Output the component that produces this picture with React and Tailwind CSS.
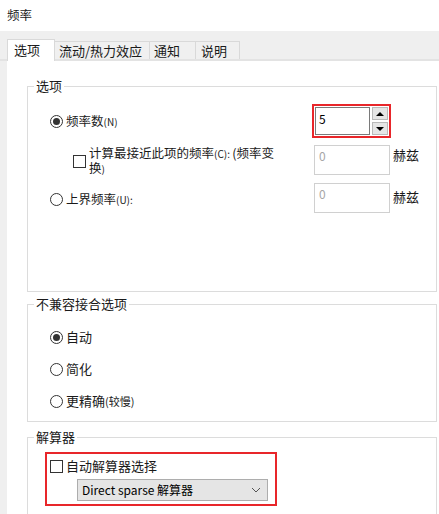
import React from 'react'

const font = { fontFamily: '"Noto Sans CJK SC", "Noto Sans", sans-serif' }

function Radio({ checked }) {
  return (
    <span className="w-[13px] h-[13px] rounded-full border border-[#333] bg-white flex items-center justify-center shrink-0">
      {checked && <span className="w-[7px] h-[7px] rounded-full bg-[#333]" />}
    </span>
  )
}

function Check() {
  return <span className="w-[13px] h-[13px] border border-[#333] bg-white shrink-0" />
}

function Disabled() {
  return (
    <div className="w-[76px] h-[30px] border border-[#d0d0d0] bg-white pl-[4px] pt-[2px] text-[12px] leading-[16px] text-[#a6a6a6]">
      0
    </div>
  )
}

function Group({ title, className, children }) {
  return (
    <fieldset className={`border border-[#dcdcdc] ml-[20px] mr-[2px] px-[6px] ${className}`}>
      <legend className="px-[2px] text-[13px] leading-[18px] text-[#1a1a1a]">{title}</legend>
      {children}
    </fieldset>
  )
}

export default function App() {
  return (
    <div className="w-[439px] h-[514px] bg-white overflow-hidden flex flex-col text-[#1a1a1a]" style={font}>
      {/* Title */}
      <div className="h-[31px] pl-[7px] pt-[6px] text-[12.5px] leading-[18px]">频率</div>

      {/* Tabs */}
      <div className="h-[30px] bg-[#efefef] border-b-2 border-[#e3e3e3] flex items-end pl-[7px] text-[13px]">
        <div className="relative -mb-[2px] w-[48px] h-[22px] bg-white border-t border-l border-r border-[#d9d9d9] pl-[6px] leading-[20px]">
          选项
        </div>
        <div className="w-[95px] h-[18px] bg-[#f0f0f0] border-t border-r border-[#d9d9d9] pl-[4px] leading-[17px]">
          流动/热力效应
        </div>
        <div className="w-[46px] h-[18px] bg-[#f0f0f0] border-t border-r border-[#d9d9d9] pl-[4px] leading-[17px]">
          通知
        </div>
        <div className="w-[44px] h-[18px] bg-[#f0f0f0] border-t border-r border-[#d9d9d9] pl-[5px] leading-[17px]">
          说明
        </div>
      </div>

      {/* Content */}
      <div className="flex flex-1 min-h-0">
        <div className="w-[7px] bg-[#efefef] shrink-0" />
        <div className="flex-1 flex flex-col pt-[16px]">
          {/* 选项 */}
          <Group title="选项" className="h-[215px] shrink-0">
            <div className="flex flex-col pt-[8px] text-[12.5px]">
              <div className="h-[36px] flex items-center">
                <div className="w-[278px] flex items-center gap-[3px] pl-[16px]">
                  <Radio checked />
                  <span>
                    频率数<span className="text-[10px]">(N)</span>
                  </span>
                </div>
                <div className="border-2 border-[#e8262a] p-[1px] flex gap-[2px]">
                  <div className="w-[55px] h-[28px] border border-[#7a7a7a] bg-white pl-[3px] pt-[3px] text-[12px] leading-[16px] text-black">
                    5
                  </div>
                  <div className="flex flex-col gap-[2px]">
                    <div className="w-[16px] h-[13px] bg-[#e5e5e5] border border-[#b9b9b9] flex items-center justify-center">
                      <span className="w-0 h-0 border-l-[4px] border-r-[4px] border-b-[4px] border-l-transparent border-r-transparent border-b-black" />
                    </div>
                    <div className="w-[16px] h-[13px] bg-[#e5e5e5] border border-[#b9b9b9] flex items-center justify-center">
                      <span className="w-0 h-0 border-l-[4px] border-r-[4px] border-t-[4px] border-l-transparent border-r-transparent border-t-black" />
                    </div>
                  </div>
                </div>
              </div>

              <div className="h-[30px] mt-[6px] flex items-start">
                <div className="w-[280px] flex items-center pl-[39px] pt-[1px]">
                  <Check />
                  <span className="ml-[3px] text-[12.5px] leading-[14px]">
                    计算最接近此项的频率<span className="text-[10px]">(C): </span>(频率变
                    <br />
                    换<span className="text-[10px]">)</span>
                  </span>
                </div>
                <Disabled />
                <span className="ml-[3px] mt-[2px] text-[13px] leading-[16px]">赫兹</span>
              </div>

              <div className="h-[30px] mt-[8px] flex items-start">
                <div className="w-[280px] flex items-center gap-[3px] pl-[16px] pt-[7px]">
                  <Radio />
                  <span>
                    上界频率<span className="text-[10px]">(U):</span>
                  </span>
                </div>
                <Disabled />
                <span className="ml-[3px] mt-[6px] text-[13px] leading-[16px]">赫兹</span>
              </div>
            </div>
          </Group>

          {/* 不兼容接合选项 */}
          <Group title="不兼容接合选项" className="mt-[3px] h-[127px] shrink-0">
            <div className="flex flex-col pl-[16px] pt-[15px] text-[13px] leading-[18px] gap-[14px]">
              <div className="flex items-center gap-[3px]">
                <Radio checked />
                <span>自动</span>
              </div>
              <div className="flex items-center gap-[3px]">
                <Radio />
                <span>简化</span>
              </div>
              <div className="flex items-center gap-[3px]">
                <Radio />
                <span>
                  更精确<span className="text-[11px]">(较慢)</span>
                </span>
              </div>
            </div>
          </Group>

          {/* 解算器 */}
          <Group title="解算器" className="mt-[6px] h-[100px] shrink-0">
            <div className="ml-[11px] mt-[6px] w-[232px] h-[54px] border-2 border-[#e8262a] pt-[3px] pl-[3px] flex flex-col">
              <div className="flex items-center gap-[3px] text-[13px] leading-[18px]">
                <Check />
                <span>自动解算器选择</span>
              </div>
              <div className="ml-[27px] mt-[4px] w-[191px] h-[22px] bg-[#e5e5e5] border border-[#adadad] flex items-center justify-between pl-[4px] pr-[6px] text-[12px] text-black">
                <span>Direct sparse 解算器</span>
                <svg width="10" height="6" viewBox="0 0 10 6" fill="none" stroke="#555" strokeWidth="1">
                  <path d="M1 1l4 4 4-4" />
                </svg>
              </div>
            </div>
          </Group>
        </div>
      </div>
    </div>
  )
}
